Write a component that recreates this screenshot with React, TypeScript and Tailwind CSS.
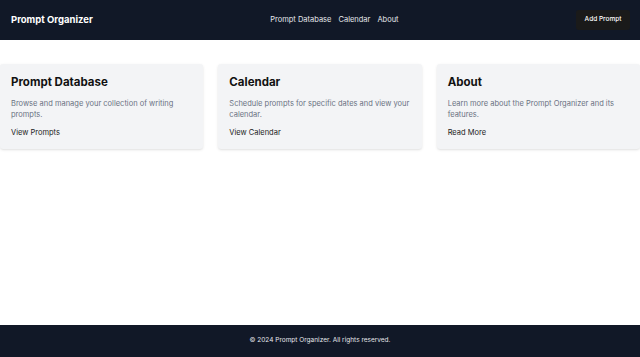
import React from 'react';

const cards = [
  {
    title: 'Prompt Database',
    text: 'Browse and manage your collection of writing prompts.',
    link: 'View Prompts',
  },
  {
    title: 'Calendar',
    text: 'Schedule prompts for specific dates and view your calendar.',
    link: 'View Calendar',
  },
  {
    title: 'About',
    text: 'Learn more about the Prompt Organizer and its features.',
    link: 'Read More',
  },
];

export default function App() {
  return (
    <div className="flex min-h-[357px] flex-col bg-white font-['Inter',sans-serif]">
      {/* Header */}
      <header className="flex h-[40px] items-center justify-between bg-[#111827] pl-[11px] pr-[10px]">
        <h1 className="text-[9.5px] font-bold text-white">Prompt Organizer</h1>
        <nav className="flex gap-[7px] text-[7.5px] text-gray-200">
          <a href="#">Prompt Database</a>
          <a href="#">Calendar</a>
          <a href="#">About</a>
        </nav>
        <button className="h-[20px] w-[54px] rounded-[3px] bg-[#1a1a1a] text-[6.5px] font-medium text-white">
          Add Prompt
        </button>
      </header>

      {/* Main */}
      <main className="flex-1 pt-[24px]">
        <div className="grid grid-cols-3 gap-[15px]">
          {cards.map((c) => (
            <div
              key={c.title}
              className="h-[85px] rounded-[3px] bg-[#f3f4f6] px-[11px] pt-[11px] shadow-sm"
            >
              <h2 className="text-[11.5px] font-bold leading-[14px] text-[#111]">{c.title}</h2>
              <p className="mt-[9px] text-[7.5px] leading-[11px] text-gray-500">{c.text}</p>
              <a href="#" className="mt-[7px] block text-[7.5px] text-[#222]">
                {c.link}
              </a>
            </div>
          ))}
        </div>
      </main>

      {/* Footer */}
      <footer className="flex h-[32px] items-center justify-center bg-[#111827] text-[6.5px] text-gray-200">
        © 2024 Prompt Organizer. All rights reserved.
      </footer>
    </div>
  );
}
